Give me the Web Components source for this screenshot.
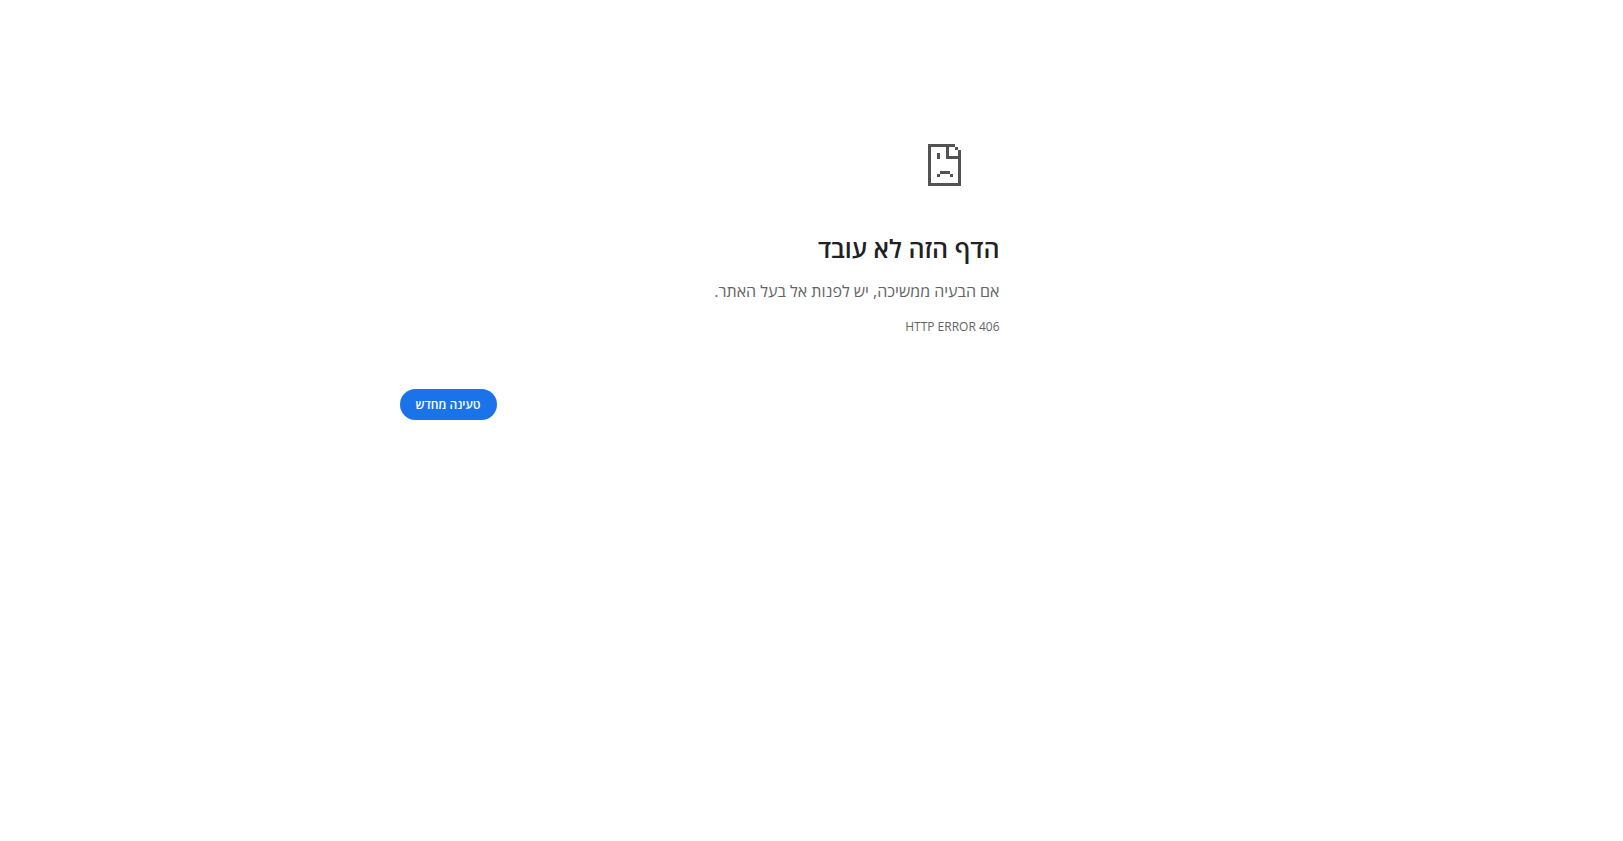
<!DOCTYPE html>
<html lang="he" dir="rtl">
<head>
<meta charset="utf-8">
<title>הדף הזה לא עובד</title>
<style>
body { margin: 0; background: #fff; font-family: "Open Sans", "Noto Sans", sans-serif; }
</style>
</head>
<body>
<error-page>
  <sad-page-icon slot="icon"></sad-page-icon>
  <error-message>
    <span slot="title">הדף הזה לא עובד</span>
    <span slot="summary">אם הבעיה ממשיכה, יש לפנות אל בעל האתר.</span>
    <span slot="code">HTTP ERROR 406</span>
  </error-message>
  <reload-button slot="actions">טעינה מחדש</reload-button>
</error-page>
<script>
const define = (name, html) => customElements.define(name, class extends HTMLElement {
  constructor() {
    super();
    this.attachShadow({ mode: "open" }).innerHTML = html;
  }
});

define("sad-page-icon", `
<style>
  :host { display: block; height: 72px; padding-inline-start: 39px; }
  svg { display: block; }
</style>
<svg width="33" height="42" viewBox="0 0 33 42" fill="#535353" shape-rendering="crispEdges" aria-hidden="true">
  <path d="M0 0H27V3H21V12H30V6H33V42H0ZM3 3V39H30V15H18V3ZM27 3H30V6H27ZM9 9H12V15H9ZM12 27H22V30H12ZM9 30H12V33H9ZM22 30H25V33H22Z" fill-rule="evenodd"/>
</svg>`);

define("error-message", `
<style>
  :host { display: block; color: #646464; }
  h1 { margin: 0 0 16px; color: #202124; font-size: 25px; line-height: 30px; font-weight: 600; }
  p { margin: 0; font-size: 16px; line-height: 24px; }
  .code { margin-top: 14px; font-size: 12px; line-height: 20px; text-align: right; }
</style>
<h1><slot name="title"></slot></h1>
<p><slot name="summary"></slot></p>
<p class="code" dir="ltr"><slot name="code"></slot></p>`);

define("reload-button", `
<style>
  :host { display: block; }
  button { display: block; height: 31px; padding: 0 16px; border: 0; border-radius: 16px;
    background: #1a73e8; color: #fff; font: 600 12px/20px "Open Sans", "Noto Sans", sans-serif; cursor: pointer; }
</style>
<button type="button"><slot></slot></button>`);

define("error-page", `
<style>
  :host { display: block; padding-block-start: 144px; padding-inline: calc(50% - 188px) 24px; }
  main { max-width: 600px; }
  .body { margin-top: 17px; }
  .actions { display: flex; justify-content: flex-end; margin-top: 52px; }
</style>
<main>
  <slot name="icon"></slot>
  <div class="body"><slot></slot></div>
  <div class="actions"><slot name="actions"></slot></div>
</main>`);
</script>
</body>
</html>
